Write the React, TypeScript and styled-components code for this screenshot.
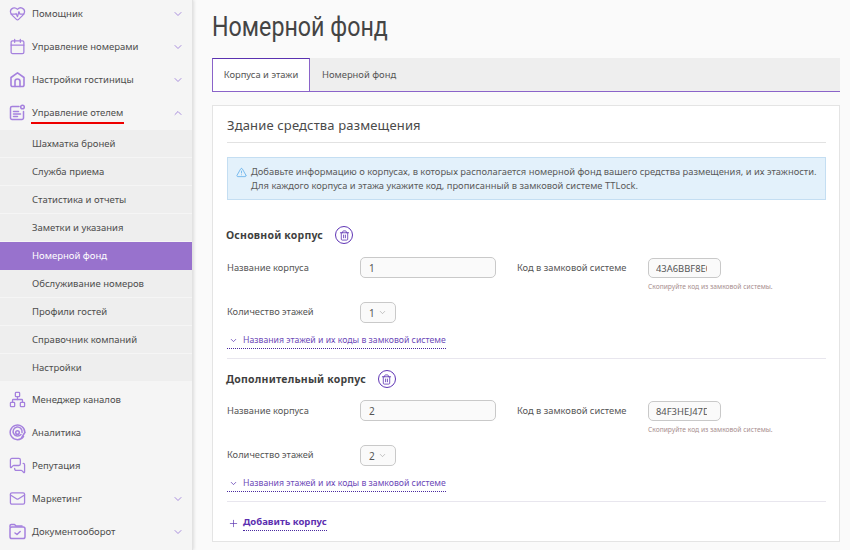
import React from 'react';
import styled, { createGlobalStyle } from 'styled-components';
import { ChevronDown, ChevronUp, HeartPulse, Calendar, Network, MessagesSquare, Mail, Trash2, TriangleAlert, Plus } from 'lucide-react';

const Global = createGlobalStyle`
  html, body { margin: 0; padding: 0; height: 100%; overflow: hidden; background: #fafafa; }
  body { font-family: "Noto Sans", "Open Sans", sans-serif; color: #444; }
  #root { height: 550px; overflow: hidden; }
`;

const Page = styled.div`
  display: flex;
  width: 850px;
  height: 550px;
  overflow: hidden;
`;
const Sidebar = styled.nav`
  width: 192px;
  height: 550px;
  flex: none;
  background: #f5f5f5;
  border-right: 1px solid #e2e2e2;
  box-shadow: 1px 0 3px rgba(0,0,0,.12);
  overflow: hidden;
`;
const Menu = styled.div`
  margin-top: -3px;
`;
const TopItem = styled.div`
  height: 33px;
  display: flex;
  align-items: center;
  padding: 0 9px;
  gap: 6px;
  color: #a581de;
`;
const IconSlot = styled.span`
  width: 17px;
  height: 17px;
  display: flex;
  flex: none;
`;
const TopLabel = styled.span<{ $marked?: boolean }>`
  flex: 1;
  font-size: 9.5px;
  line-height: 14px;
  color: #4d4d4d;
  padding-top: 1px;
  ${p => p.$marked ? `
    position: relative;
    &::after { content: ""; position: absolute; left: -1px; top: 17px; width: 93px; height: 2px; background: #e00; }
  ` : ''}
`;
const Sub = styled.div`
  background: #eeeeee;
  margin: 1px 0;
`;
const SubItem = styled.div<{ $active?: boolean }>`
  height: 28px;
  box-sizing: border-box;
  display: flex;
  align-items: center;
  padding-left: 32px;
  font-size: 9.5px;
  color: ${p => p.$active ? '#fff' : '#4d4d4d'};
  background: ${p => p.$active ? '#9872cd' : 'transparent'};
  border-bottom: 1px solid ${p => p.$active ? '#9872cd' : '#f5f5f5'};
`;
const Main = styled.main`
  flex: 1;
  padding: 0 10px 0 19px;
`;
const Title = styled.h1`
  margin: 0;
  height: 58px;
  display: flex;
  align-items: center;
  padding-bottom: 4px;
  box-sizing: border-box;
  font: 400 28px/32px Roboto, sans-serif;
  color: #444;
  transform: scaleX(.83);
  transform-origin: left center;
  white-space: nowrap;
`;
const Tabs = styled.div`
  display: flex;
  height: 34px;
  box-sizing: border-box;
  background: #eeeeee;
  border-bottom: 1px solid #8a63c9;
`;
const Tab = styled.div<{ $active?: boolean }>`
  width: ${p => p.$active ? '98px' : 'auto'};
  height: ${p => p.$active ? '34px' : '33px'};
  box-sizing: border-box;
  display: flex;
  align-items: center;
  font-size: 9.4px;
  color: #555;
  ${p => p.$active
    ? 'justify-content: center; background: #fff; border: 1px solid #8a63c9; border-top: 1px solid #5a32b0; border-bottom: 1px solid #8a63c9; padding-bottom: 2px;'
    : 'padding: 0 12px;'}
`;
const Card = styled.section`
  margin-top: 13px;
  height: 437px;
  box-sizing: border-box;
  background: #fff;
  border: 1px solid #e4e4e4;
  padding: 0 13px 0 14px;
`;
const CardTitle = styled.div`
  height: 37px;
  box-sizing: border-box;
  border-bottom: 1px solid #e2e2e2;
  font-size: 13px;
  letter-spacing: .15px;
  line-height: 18px;
  padding-top: 10px;
  color: #4a4a4a;
`;
const Alert = styled.div`
  margin-top: 14px;
  height: 43px;
  box-sizing: border-box;
  display: flex;
  gap: 4px;
  padding: 7px 0 0 8px;
  background: #e3f1fb;
  border: 1px solid #c4def2;
  font-size: 9.36px;
  line-height: 14px;
  white-space: nowrap;
  color: #5a5a5a;
  & svg { flex: none; margin-top: 2px; color: #4aa3e8; }
`;
const Block = styled.div<{ $first?: boolean }>`
  padding-top: ${p => p.$first ? '26px' : '11px'};
  height: ${p => p.$first ? '159px' : '143px'};
  box-sizing: border-box;
  border-bottom: 1px solid #e8e6ee;
`;
const Heading = styled.div`
  display: flex;
  align-items: center;
  gap: 12px;
  height: 18px;
  margin-left: -1px;
  font-size: 10.5px;
  font-weight: 700;
  letter-spacing: .2px;
  color: #3f3f3f;
`;
const TrashBtn = styled.span`
  width: 18px;
  height: 18px;
  box-sizing: border-box;
  border: 1.3px solid #5f35b5;
  border-radius: 50%;
  display: flex;
  align-items: center;
  justify-content: center;
  color: #5f35b5;
`;
const Row = styled.div<{ $first?: boolean }>`
  display: flex;
  align-items: flex-start;
  margin-top: ${p => p.$first ? '13px' : '12px'};
  height: 33px;
`;
const CountRow = styled(Row)`
  margin-top: 12px;
  height: 21px;
`;
const Label = styled.div<{ $w: number; $lh?: number }>`
  width: ${p => p.$w}px;
  flex: none;
  font-size: 9.3px;
  line-height: ${p => p.$lh ?? 20}px;
  color: #555;
`;
const Input = styled.input`
  box-sizing: border-box;
  height: 21px;
  border: 1px solid #c9c9c9;
  border-radius: 5px;
  background: #fafafa;
  padding: 0 8px;
  font: 400 10px "Noto Sans", sans-serif;
  color: #555;
  outline: none;
`;
const NameInput = styled(Input)`
  width: 136px;
  margin-right: 21px;
`;
const CodeWrap = styled.div`
  display: flex;
  flex-direction: column;
`;
const CodeInput = styled(Input)`
  width: 73px;
  height: 20px;
  margin-top: 1px;
  padding: 0 13px 0 7px;
  font-size: 9.4px;
`;
const Hint = styled.div`
  font-size: 6.7px;
  line-height: 9px;
  margin-top: 4px;
  color: #a88f8f;
  white-space: nowrap;
`;
const Select = styled.div`
  width: 36px;
  height: 21px;
  box-sizing: border-box;
  border: 1px solid #c9c9c9;
  border-radius: 5px;
  background: #fafafa;
  display: flex;
  align-items: center;
  gap: 3px;
  padding-left: 8px;
  font-size: 10px;
  color: #555;
  & svg { color: #999; }
`;
const LinkRow = styled.div`
  display: inline-flex;
  align-items: flex-end;
  gap: 5px;
  margin-top: 10px;
  height: 14px;
  padding: 0 0 1px 2px;
  border-bottom: 1px dotted #4a2aa0;
  font-size: 8.7px;
  line-height: 13px;
  color: #6d4ab8;
  & svg { color: #5a35b0; margin-bottom: 2px; }
`;
const AddRow = styled.div`
  display: flex;
  align-items: center;
  gap: 4px;
  margin-top: 13px;
  padding-left: 1px;
  color: #5a35b0;
`;
const AddLabel = styled.span`
  font-size: 9.5px;
  font-weight: 700;
  color: #5c30b0;
  border-bottom: 1px dotted #4a2aa0;
  padding-bottom: 1px;
  line-height: 14px;
`;

const s = { size: 17, strokeWidth: 1.8 };
const HouseIcon = () => (
  <svg width="17" height="17" viewBox="0 0 17 17" fill="none" stroke="currentColor" strokeWidth="1.6" strokeLinecap="round" strokeLinejoin="round">
    <path d="M2 6.500 8.500 1.800 15 6.500V14a1.500 1.500 0 0 1-1.500 1.500h-10A1.500 1.500 0 0 1 2 14Z" />
    <path d="M6 15.500V10.500a2.500 2.500 0 0 1 5 0v5" />
  </svg>
);
const DocIcon = () => (
  <svg width="17" height="17" viewBox="0 0 17 17" fill="none" stroke="currentColor" strokeWidth="1.5" strokeLinecap="round">
    <path d="M10 2.500H3a1.500 1.500 0 0 0-1.500 1.500v10A1.500 1.500 0 0 0 3 15.500h10a1.500 1.500 0 0 0 1.500-1.500V7.500" />
    <circle cx="13.500" cy="3" r="1.800" />
    <path d="M4.500 7.500h5M4.500 10h7M4.500 12.500h4" />
  </svg>
);
const RadarIcon = () => (
  <svg width="17" height="17" viewBox="0 0 17 17" fill="none" stroke="currentColor" strokeWidth="1.5" strokeLinecap="round">
    <path d="M14.500 12.500A7.300 7.300 0 1 1 15.800 8.500" />
    <path d="M12 10.500A4.500 4.500 0 1 1 13 8.500" />
    <circle cx="8.500" cy="8.500" r="1.800" />
    <path d="M15.800 8.500 12.500 14" />
  </svg>
);
const FolderIcon = () => (
  <svg width="17" height="17" viewBox="0 0 17 17" fill="none" stroke="currentColor" strokeWidth="1.5" strokeLinecap="round" strokeLinejoin="round">
    <path d="M1 4V2.800C1 2 1.500 1.500 2.300 1.500h3.200l1.500 1.500h6" />
    <rect x="1" y="4" width="15" height="11.500" rx="1.800" />
    <path d="m6 10 2 1.500 3.200-3" />
  </svg>
);

const Chev = () => <ChevronDown size={12} strokeWidth={2} color="#a98ede" style={{ marginRight: -1 }} />;

const top1 = [
  { icon: <HeartPulse {...s} />, label: 'Помощник', chev: true },
  { icon: <Calendar {...s} />, label: 'Управление номерами', chev: true },
  { icon: <HouseIcon />, label: 'Настройки гостиницы', chev: true },
];
const subs = ['Шахматка броней', 'Служба приема', 'Статистика и отчеты', 'Заметки и указания', 'Номерной фонд', 'Обслуживание номеров', 'Профили гостей', 'Справочник компаний', 'Настройки'];
const top2 = [
  { icon: <Network {...s} />, label: 'Менеджер каналов', chev: false },
  { icon: <RadarIcon />, label: 'Аналитика', chev: false },
  { icon: <MessagesSquare {...s} />, label: 'Репутация', chev: false },
  { icon: <Mail {...s} />, label: 'Маркетинг', chev: true },
  { icon: <FolderIcon />, label: 'Документооборот', chev: true },
];

const Corps = ({ title, name, code, floors, first }: { title: string; name: string; code: string; floors: string; first?: boolean }) => (
  <Block $first={first}>
    <Heading>
      <span>{title}</span>
      <TrashBtn><Trash2 size={11} strokeWidth={1.8} /></TrashBtn>
    </Heading>
    <Row $first={first}>
      <Label $w={133} $lh={22}>Название корпуса</Label>
      <NameInput readOnly value={name} />
      <Label $w={131} $lh={22}>Код в замковой системе</Label>
      <CodeWrap>
        <CodeInput readOnly value={code} />
        <Hint>Скопируйте код из замковой системы.</Hint>
      </CodeWrap>
    </Row>
    <CountRow>
      <Label $w={133}>Количество этажей</Label>
      <Select>{floors}<ChevronDown size={9} strokeWidth={1.5} /></Select>
    </CountRow>
    <LinkRow>
      <ChevronDown size={9} strokeWidth={2} />
      Названия этажей и их коды в замковой системе
    </LinkRow>
  </Block>
);

export default function App() {
  return (
    <Page>
      <Global />
      <Sidebar>
        <Menu>
          {top1.map(i => (
            <TopItem key={i.label}>
              <IconSlot>{i.icon}</IconSlot>
              <TopLabel>{i.label}</TopLabel>
              {i.chev && <Chev />}
            </TopItem>
          ))}
          <TopItem>
            <IconSlot><DocIcon /></IconSlot>
            <TopLabel $marked>Управление отелем</TopLabel>
            <ChevronUp size={12} strokeWidth={2} color="#a98ede" style={{ marginRight: -1 }} />
          </TopItem>
          <Sub>
            {subs.map(t => <SubItem key={t} $active={t === 'Номерной фонд'}>{t}</SubItem>)}
          </Sub>
          {top2.map(i => (
            <TopItem key={i.label}>
              <IconSlot>{i.icon}</IconSlot>
              <TopLabel>{i.label}</TopLabel>
              {i.chev && <Chev />}
            </TopItem>
          ))}
        </Menu>
      </Sidebar>
      <Main>
        <Title>Номерной фонд</Title>
        <Tabs>
          <Tab $active>Корпуса и этажи</Tab>
          <Tab>Номерной фонд</Tab>
        </Tabs>
        <Card>
          <CardTitle>Здание средства размещения</CardTitle>
          <Alert>
            <TriangleAlert size={11} strokeWidth={1.5} />
            <div>
              Добавьте информацию о корпусах, в которых располагается номерной фонд вашего средства размещения, и их этажности.<br />
              Для каждого корпуса и этажа укажите код, прописанный в замковой системе TTLock.
            </div>
          </Alert>
          <Corps first title="Основной корпус" name="1" code="43A6BBF8E0C2" floors="1" />
          <Corps title="Дополнительный корпус" name="2" code="84F3HEJ47D19" floors="2" />
          <AddRow>
            <Plus size={11} strokeWidth={1.5} />
            <AddLabel>Добавить корпус</AddLabel>
          </AddRow>
        </Card>
      </Main>
    </Page>
  );
}
